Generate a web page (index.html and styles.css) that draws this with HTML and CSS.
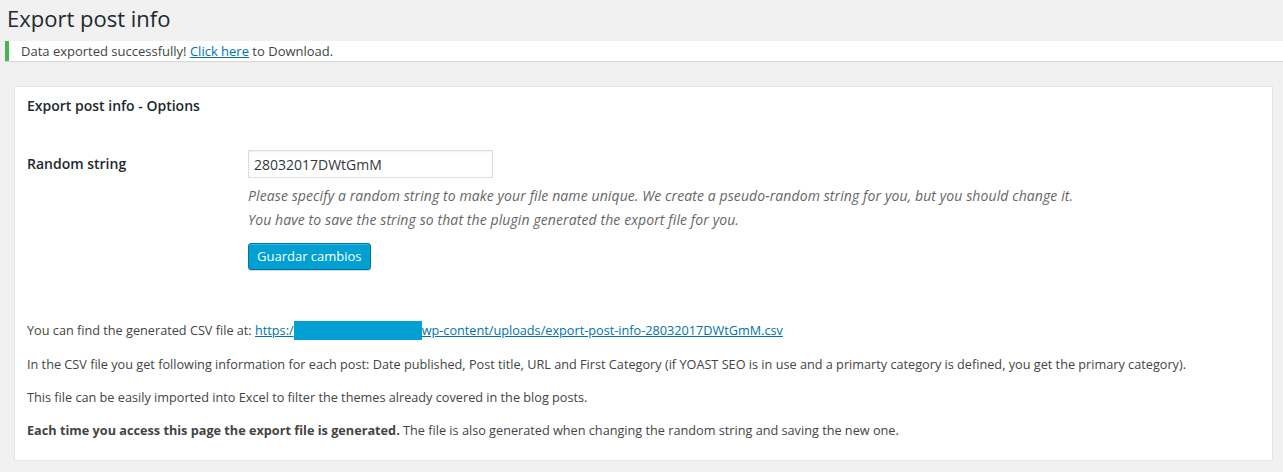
FILE: index.html
```html
<!DOCTYPE html>
<html lang="en">
<head>
<meta charset="utf-8">
<title>Export post info</title>
<link rel="stylesheet" href="styles.css">
</head>
<body>
<div class="wrap">
  <h1 class="page-title">Export post info</h1>
  <div class="notice">
    <p>Data exported successfully! <a href="#">Click here</a> to Download.</p>
  </div>
  <div class="card">
    <h2 class="card-title">Export post info - Options</h2>
    <div class="form-row">
      <div class="form-label">Random string</div>
      <div class="form-field">
        <input class="text-input" type="text" value="28032017DWtGmM">
        <p class="description">Please specify a random string to make your file name unique. We create a pseudo-random string for you, but you should change it.</p>
        <p class="description">You have to save the string so that the plugin generated the export file for you.</p>
        <button class="button-primary" type="button">Guardar cambios</button>
      </div>
    </div>
    <div class="info">
      <p>You can find the generated CSV file at: <a href="#">https:/<span class="redact"></span>wp-content/uploads/export-post-info-28032017DWtGmM.csv</a></p>
      <p>In the CSV file you get following information for each post: Date published, Post title, URL and First Category (if YOAST SEO is in use and a primarty category is defined, you get the primary category).</p>
      <p>This file can be easily imported into Excel to filter the themes already covered in the blog posts.</p>
      <p><strong>Each time you access this page the export file is generated.</strong> The file is also generated when changing the random string and saving the new one.</p>
    </div>
  </div>
</div>
</body>
</html>
```

FILE: styles.css
```css
html, body {
  margin: 0;
  padding: 0;
  background: #f1f1f1;
}
body {
  font-family: "Open Sans", "Noto Sans", sans-serif;
  font-size: 13px;
  color: #444;
  line-height: 1.4;
}
.wrap {
  padding: 0 10px 0 5px;
}
.page-title {
  margin: 0;
  padding: 4px 0 8px 2px;
  font-size: 22px;
  font-weight: 400;
  line-height: 29px;
  color: #23282d;
}
.notice {
  background: #fff;
  border-left: 4px solid #46b450;
  box-shadow: 0 1px 1px rgba(0,0,0,0.1);
  margin: 0 -10px 25px 0;
  padding: 0 12px;
}
.notice p {
  margin: 0;
  padding: 1px 0;
  line-height: 18px;
  color: #444;
}
a {
  color: #0073aa;
  text-decoration: underline;
}
.notice a {
  font-weight: 500;
}
.card {
  background: #fff;
  border: 1px solid #e5e5e5;
  box-shadow: 0 1px 1px rgba(0,0,0,0.04);
  margin-left: 9px;
  padding: 0 12px 21px;
}
.card-title {
  margin: 0;
  padding: 10px 0 14px;
  font-size: 14px;
  font-weight: 600;
  color: #23282d;
  line-height: 18px;
}
.form-row {
  display: grid;
  grid-template-columns: 221px 1fr;
  padding-top: 21px;
}
.form-label {
  font-size: 14px;
  font-weight: 600;
  color: #23282d;
  padding-top: 4px;
  line-height: 20px;
}
.form-field {
  display: flex;
  flex-direction: column;
  align-items: flex-start;
}
.text-input {
  width: 245px;
  height: 28px;
  box-sizing: border-box;
  border: 1px solid #ddd;
  box-shadow: inset 0 1px 2px rgba(0,0,0,0.07);
  padding: 3px 5px;
  font-family: inherit;
  font-size: 14px;
  color: #32373c;
  margin: 0;
}
.description {
  margin: 8px 0 0;
  font-style: italic;
  font-size: 14px;
  letter-spacing: 0.1px;
  color: #666;
  line-height: 20px;
}
.description + .description {
  margin-top: 4px;
}
.button-primary {
  margin-top: 13px;
  height: 27px;
  padding: 0 8px 1px;
  background: #00a0d2;
  border: 1px solid #0073aa;
  border-radius: 3px;
  box-shadow: inset 0 1px 0 rgba(120,200,230,0.5), 0 1px 0 rgba(0,0,0,0.15);
  color: #fff;
  font-family: inherit;
  font-size: 13px;
  line-height: 24px;
}
.info {
  padding-top: 51px;
}
.info p {
  margin: 0 0 15px;
  font-size: 12.7px;
  line-height: 18px;
}
.info p:last-child {
  margin-bottom: 0;
}
.redact {
  display: inline-block;
  width: 128px;
  height: 19px;
  background: #00a0d2;
  vertical-align: -5px;
}
```
